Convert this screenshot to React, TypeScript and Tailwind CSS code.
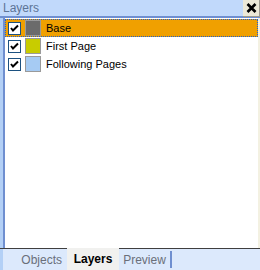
import React from 'react';

const layers = [
  { name: 'Base', color: '#6b6b6b', selected: true },
  { name: 'First Page', color: '#c8cc00', selected: false },
  { name: 'Following Pages', color: '#a6cbf3', selected: false },
];

function Check() {
  return (
    <div className="w-[13px] h-[13px] border border-[#1c5180] bg-white flex items-center justify-center shrink-0">
      <svg width="9" height="9" viewBox="0 0 9 9">
        <path d="M1 4 L3 6.5 L8 1.5" stroke="#000" strokeWidth="2" fill="none" />
      </svg>
    </div>
  );
}

export default function App() {
  return (
    <div
      className="w-[260px] h-[270px] bg-white flex flex-col overflow-hidden text-[11px] text-black"
      style={{ fontFamily: '"Liberation Sans", Tahoma, sans-serif' }}
    >
      {/* title bar */}
      <div className="h-[18px] bg-[#c1d9fb] border-b-2 border-[#6f8fd0] flex items-center justify-between shrink-0">
        <span className="pl-[3px] text-[12px] text-[#5d7496]">Layers</span>
        <button className="w-[17px] h-[17px] bg-[#ece9d8] border-r border-b border-[#9c9a8f] flex items-center justify-center self-start">
          <svg width="11" height="10" viewBox="0 0 11 10">
            <path d="M1.5 1 L9.5 9 M9.5 1 L1.5 9" stroke="#000" strokeWidth="2.6" />
          </svg>
        </button>
      </div>

      {/* list */}
      <div className="flex-1 flex min-h-0">
        <div className="w-[3px] bg-[#b3d0f6]" />
        <div className="w-[2px] bg-[#6f8fd0]" />
        <div className="flex-1 flex flex-col pt-[1px]">
          {layers.map((l) => (
            <div
              key={l.name}
              className={
                'h-[18px] flex items-center ' +
                (l.selected ? 'bg-[#f0a000] outline-dotted outline-1 outline-[#1b5fd6] -outline-offset-1' : '')
              }
            >
              <div className="pl-[3px]">
                <Check />
              </div>
              <div
                className="ml-[4px] w-[16px] h-[16px] border border-[#9a9a9a]"
                style={{ background: l.color }}
              />
              <span className="ml-[5px]">{l.name}</span>
            </div>
          ))}
        </div>
        <div className="w-[2px] bg-[#f3f1e2]" />
      </div>

      {/* tabs */}
      <div className="h-[22px] border-t border-[#3f3f3f] bg-[#dce9fc] flex items-stretch shrink-0">
        <div className="w-[5px] border-l-[3px] border-[#b3d0f6]" />
        <div className="w-[62px] flex items-center justify-end pr-[5px] text-[#6a6f7a] text-[12px]">Objects</div>
        <div className="w-[52px] bg-[#f1f1ef] flex items-center justify-center font-bold text-[12px] mt-[-1px]">
          Layers
        </div>
        <div className="w-[53px] flex items-center justify-center text-[#6a6f7a] text-[12px] border-r-2 border-[#6f8fd0] my-[2px]">
          Preview
        </div>
      </div>
    </div>
  );
}
